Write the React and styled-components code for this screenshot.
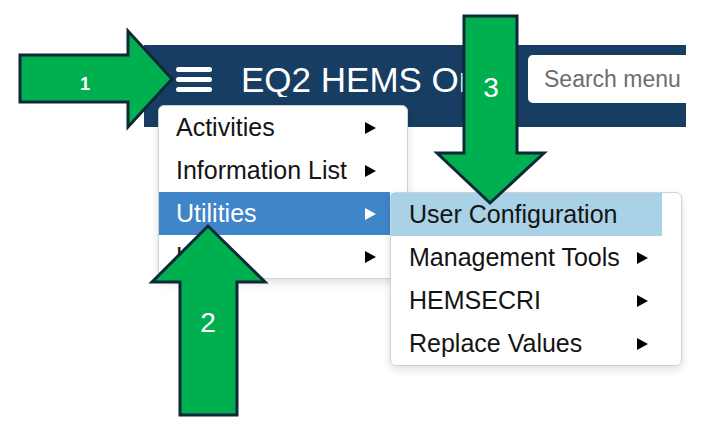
import React from "react";
import styled, { createGlobalStyle } from "styled-components";

const GlobalStyle = createGlobalStyle`
  body {
    margin: 0;
    background: #ffffff;
    font-family: "Liberation Sans", Arial, sans-serif;
  }
`;

const Page = styled.div`
  position: relative;
  width: 708px;
  height: 431px;
  overflow: hidden;
  box-sizing: border-box;
  padding: 45px 0 0 144px;
`;

const NavWrap = styled.div`
  position: relative;
  width: 542px;
`;

const Header = styled.header`
  display: flex;
  align-items: center;
  height: 82px;
  box-sizing: border-box;
  padding: 0 0 14px 32px;
  background: #173d62;
  overflow: hidden;
`;

const Burger = styled.button`
  display: flex;
  flex-direction: column;
  gap: 5px;
  flex: 0 0 auto;
  width: 36px;
  padding: 0;
  border: 0;
  background: none;
  span {
    display: block;
    height: 5px;
    border-radius: 3px;
    background: #ffffff;
  }
`;

const Title = styled.h1`
  flex: 0 0 auto;
  width: 276px;
  margin: 0 0 0 29px;
  overflow: hidden;
  white-space: nowrap;
  font-size: 35px;
  font-weight: 400;
  line-height: 1;
  color: #ffffff;
`;

const Search = styled.input`
  flex: 0 0 auto;
  width: 220px;
  height: 48px;
  margin-left: 11px;
  box-sizing: border-box;
  padding: 0 0 0 16px;
  border: 0;
  border-radius: 5px;
  background: #ffffff;
  font-family: inherit;
  font-size: 23px;
  &::placeholder {
    color: #6d6d6d;
  }
`;

const Menu = styled.ul`
  position: ${(p) => (p.$sub ? "absolute" : "absolute")};
  top: ${(p) => (p.$sub ? "0" : "60px")};
  left: ${(p) => (p.$sub ? "100%" : "14px")};
  width: ${(p) => (p.$sub ? "292px" : "250px")};
  margin: 0;
  padding: 0 ${(p) => (p.$sub ? "19px" : "17px")} 0 0;
  box-sizing: border-box;
  list-style: none;
  background: #ffffff;
  border: 1px solid #c9d3dc;
  border-radius: 6px;
  box-shadow: 0 4px 10px rgba(0, 0, 0, 0.12);
  z-index: ${(p) => (p.$sub ? 2 : 1)};
`;

const Item = styled.li`
  position: relative;
  display: flex;
  align-items: center;
  justify-content: space-between;
  height: 43px;
  padding: 0 14px 0 ${(p) => (p.$sub ? "18px" : "17px")};
  font-size: 25px;
  color: ${(p) => (p.$active ? "#ffffff" : "#141414")};
  background: ${(p) =>
    p.$active ? "#3f86c8" : p.$hover ? "#a9d2e6" : "transparent"};
  white-space: nowrap;
`;

const Caret = styled.span`
  width: 0;
  height: 0;
  border-top: 6px solid transparent;
  border-bottom: 6px solid transparent;
  border-left: 11px solid ${(p) => (p.$light ? "#ffffff" : "#000000")};
`;

const Overlay = styled.svg`
  position: absolute;
  top: 0;
  left: 0;
  width: 708px;
  height: 431px;
  pointer-events: none;
  z-index: 5;
`;

const Label = styled.text`
  fill: #ffffff;
  font-family: "Liberation Sans", Arial, sans-serif;
  font-size: ${(p) => p.$size}px;
  font-weight: ${(p) => (p.$bold ? 700 : 400)};
  text-anchor: middle;
`;

const utilities = [
  { label: "User Configuration", hover: true },
  { label: "Management Tools", more: true },
  { label: "HEMSECRI", more: true },
  { label: "Replace Values", more: true },
];

const Arrows = () => (
  <Overlay viewBox="0 0 708 431">
    <g fill="#00b050" stroke="#0e2838" strokeWidth="3" strokeLinejoin="miter">
      <polygon points="20,55 128,55 128,31 172,79 128,127 128,102 20,102" />
      <polygon points="180,415 180,282 152,282 208,226 265,282 237,282 237,415" />
      <polygon points="464,16 517,16 517,153 544,153 490,203 437,153 464,153" />
    </g>
    <Label x="85" y="90" $size={18} $bold>
      1
    </Label>
    <Label x="208" y="332" $size={28}>
      2
    </Label>
    <Label x="491" y="97" $size={28}>
      3
    </Label>
  </Overlay>
);

export default function App() {
  return (
    <>
      <GlobalStyle />
      <Page>
        <NavWrap>
          <Header>
            <Burger aria-label="Menu">
              <span />
              <span />
              <span />
            </Burger>
            <Title>EQ2 HEMS Online</Title>
            <Search placeholder="Search menu" />
          </Header>
          <Menu>
            <Item>
              Activities
              <Caret />
            </Item>
            <Item>
              Information List
              <Caret />
            </Item>
            <Item $active>
              Utilities
              <Caret $light />
              <Menu $sub>
                {utilities.map((u) => (
                  <Item key={u.label} $sub $hover={u.hover}>
                    {u.label}
                    {u.more && <Caret />}
                  </Item>
                ))}
              </Menu>
            </Item>
            <Item>
              Help
              <Caret />
            </Item>
          </Menu>
        </NavWrap>
        <Arrows />
      </Page>
    </>
  );
}
